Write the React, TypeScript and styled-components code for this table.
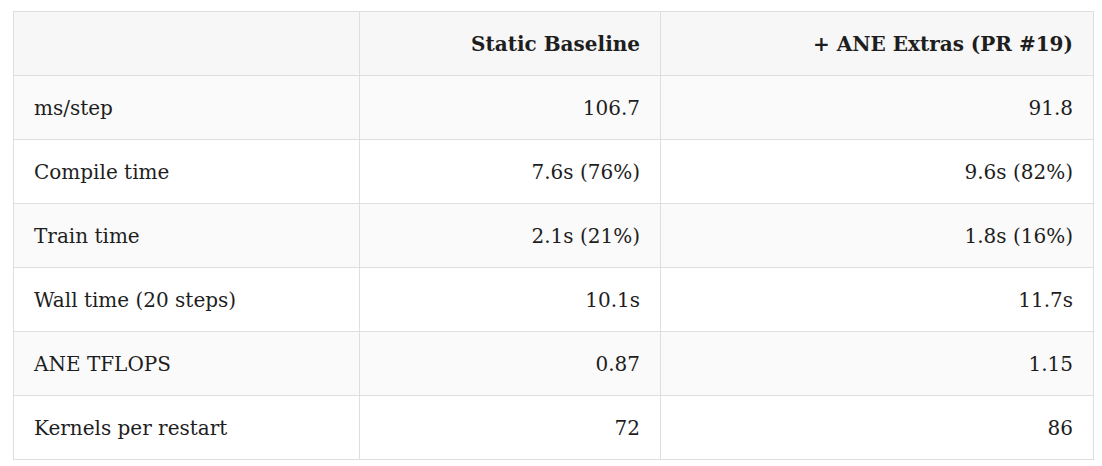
import React from 'react';
import styled, { createGlobalStyle } from 'styled-components';

const GlobalStyle = createGlobalStyle`
  html, body {
    margin: 0;
    padding: 0;
    background: #ffffff;
  }
`;

const Page = styled.div`
  padding: 11px 10px 0 13px;
`;

const Table = styled.table`
  width: 1080px;
  border-collapse: collapse;
  table-layout: fixed;
  font-family: 'DejaVu Serif', 'Liberation Serif', serif;
  font-size: 20px;
  color: #1e1e1e;
`;

const HeadCell = styled.th<{ align?: 'left' | 'right' }>`
  height: 63px;
  padding: 0 20px;
  background: #f7f7f7;
  border: 1px solid #dedede;
  font-weight: 700;
  text-align: ${({ align }) => align || 'right'};
`;

const Row = styled.tr`
  &:nth-child(odd) td {
    background: #fafafa;
  }
  &:nth-child(even) td {
    background: #ffffff;
  }
`;

const Cell = styled.td<{ align?: 'left' | 'right' }>`
  height: 63px;
  padding: 0 20px;
  border: 1px solid #dedede;
  text-align: ${({ align }) => align || 'right'};
`;

type Metric = {
  label: string;
  baseline: string;
  extras: string;
};

const metrics: Metric[] = [
  { label: 'ms/step', baseline: '106.7', extras: '91.8' },
  { label: 'Compile time', baseline: '7.6s (76%)', extras: '9.6s (82%)' },
  { label: 'Train time', baseline: '2.1s (21%)', extras: '1.8s (16%)' },
  { label: 'Wall time (20 steps)', baseline: '10.1s', extras: '11.7s' },
  { label: 'ANE TFLOPS', baseline: '0.87', extras: '1.15' },
  { label: 'Kernels per restart', baseline: '72', extras: '86' },
];

const App = () => (
  <Page>
    <GlobalStyle />
    <Table>
      <colgroup>
        <col style={{ width: 346 }} />
        <col style={{ width: 301 }} />
        <col style={{ width: 433 }} />
      </colgroup>
      <thead>
        <tr>
          <HeadCell align="left" />
          <HeadCell>Static Baseline</HeadCell>
          <HeadCell>+ ANE Extras (PR #19)</HeadCell>
        </tr>
      </thead>
      <tbody>
        {metrics.map((m) => (
          <Row key={m.label}>
            <Cell align="left">{m.label}</Cell>
            <Cell>{m.baseline}</Cell>
            <Cell>{m.extras}</Cell>
          </Row>
        ))}
      </tbody>
    </Table>
  </Page>
);

export default App;
